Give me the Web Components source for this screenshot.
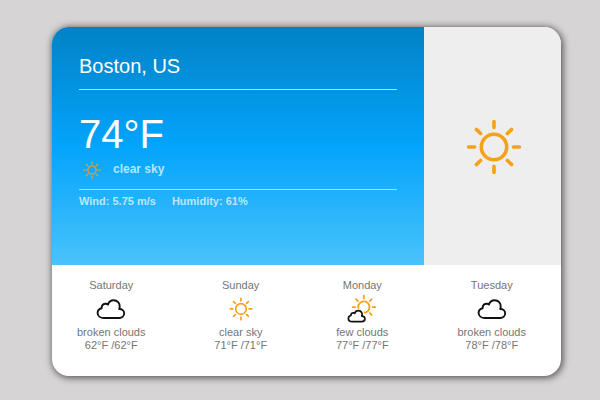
<!DOCTYPE html>
<html lang="en">
<head>
<meta charset="utf-8">
<title>Boston weather</title>
<style>
  body {
    margin: 0;
    padding: 27px 39px 24px 52px;
    background: #d6d4d5;
    font-family: "Liberation Sans", Arial, sans-serif;
    font-size: 11px;
    line-height: 13px;
    color: #757575;
  }
</style>
</head>
<body>
<weather-card>
  <current-weather slot="now" city="Boston, US" temp="74°F" sky="clear sky" wind="5.75 m/s" humidity="61%"></current-weather>
  <weather-icon slot="hero" kind="sun" style="--size:56px"></weather-icon>
  <forecast-day slot="days" day="Saturday" icon="cloud" temps="62°F /62°F">broken clouds</forecast-day>
  <forecast-day slot="days" day="Sunday" icon="clear" temps="71°F /71°F">clear sky</forecast-day>
  <forecast-day slot="days" day="Monday" icon="few" temps="77°F /77°F">few clouds</forecast-day>
  <forecast-day slot="days" day="Tuesday" icon="cloud" temps="78°F /78°F">broken clouds</forecast-day>
</weather-card>

<script>
const SUN = `
  <g fill="none" stroke="#f7a11a" stroke-linecap="round">
    <circle cx="28" cy="28" r="12.7"/>
    <path d="M28 2.6V8.6M28 47.4V53.4M2.6 28H8.6M47.4 28H53.4M10.4 10.4L14.6 14.6M41.4 41.4L45.6 45.6M10.4 45.6L14.6 41.4M41.4 14.6L45.6 10.4"/>
  </g>`;
const CLOUD = "M7.2 18.7C3.8 18.7 1 16.6 1 13.6C1 11.2 2.6 9.4 5 8.9C4.8 6 7 4.2 9.4 4.5C10.2 4.6 10.8 4.9 11.3 5.3C12.2 2.6 14.4 1 17 1C20.8 1 23.4 3.9 23.1 7.8C23 8.6 22.8 9.2 22.6 9.7C25.4 9.6 27.6 11.4 27.6 14C27.6 16.7 25.4 18.7 22.6 18.7Z";
const ICONS = {
  sun: `<svg viewBox="0 0 56 56" stroke-width="3.6">${SUN}</svg>`,
  small: `<svg viewBox="0 0 56 56" stroke-width="4.8">${SUN}</svg>`,
  clear: `<svg viewBox="0 0 30 30"><g transform="translate(3.2 3.2) scale(.42)" stroke-width="4">${SUN}</g></svg>`,
  cloud: `<svg viewBox="0 0 30 30"><path transform="translate(.6 5.3)" d="${CLOUD}" fill="#fff" stroke="#111" stroke-width="1.9" stroke-linejoin="round"/></svg>`,
  few: `<svg viewBox="0 0 30 30">
      <g transform="translate(4.4 .6) scale(.445)" stroke-width="4">${SUN}</g>
      <path transform="translate(.8 16) scale(.62)" d="${CLOUD}" fill="#fff" stroke="#fff" stroke-width="6"/>
      <path transform="translate(.8 16) scale(.62)" d="${CLOUD}" fill="#fff" stroke="#111" stroke-width="2.8" stroke-linejoin="round"/>
    </svg>`
};

class WeatherIcon extends HTMLElement {
  connectedCallback() {
    this.attachShadow({mode: "open"}).innerHTML = `
      <style>
        :host { display: block; width: var(--size, 30px); height: var(--size, 30px); }
        svg { display: block; width: 100%; height: 100%; }
      </style>${ICONS[this.getAttribute("kind")]}`;
  }
}

class CurrentWeather extends HTMLElement {
  connectedCallback() {
    const a = n => this.getAttribute(n);
    this.attachShadow({mode: "open"}).innerHTML = `
      <style>
        :host { display: block; padding: 27px; color: #fff;
          background: linear-gradient(#0282c4, #03a4fc 50%, #49c3fb); }
        h1 { margin: 0; padding-bottom: 11px; font-size: 20px; line-height: 24px; font-weight: 400;
          border-bottom: 1px solid rgba(255,255,255,.7); }
        .temp { margin: 22px 0 0; font-size: 40px; line-height: 44px; }
        .sky { display: flex; align-items: center; gap: 12px; padding: 2px 0 8px 4px; height: 23px;
          font-size: 12px; font-weight: 700; color: rgba(255,255,255,.7);
          border-bottom: 1px solid rgba(255,255,255,.6); }
        weather-icon { --size: 18px; opacity: .75; }
        .facts { display: flex; gap: 16px; margin: 5px 0 0; font-weight: 700; color: rgba(255,255,255,.7); }
        p { margin: 0; }
      </style>
      <h1>${a("city")}</h1>
      <p class="temp">${a("temp")}</p>
      <div class="sky"><weather-icon kind="small"></weather-icon><span>${a("sky")}</span></div>
      <div class="facts"><p>Wind: ${a("wind")}</p><p>Humidity: ${a("humidity")}</p></div>`;
  }
}

class ForecastDay extends HTMLElement {
  connectedCallback() {
    const a = n => this.getAttribute(n);
    this.attachShadow({mode: "open"}).innerHTML = `
      <style>
        :host { display: flex; flex-direction: column; align-items: center; white-space: nowrap; }
        weather-icon { margin: 2px 0; }
      </style>
      <span>${a("day")}</span>
      <weather-icon kind="${a("icon")}"></weather-icon>
      <slot></slot>
      <span>${a("temps")}</span>`;
  }
}

class WeatherCard extends HTMLElement {
  connectedCallback() {
    this.attachShadow({mode: "open"}).innerHTML = `
      <style>
        :host { display: block; overflow: hidden; border-radius: 17px; background: #fff;
          box-shadow: 1px 1px 7px 1px rgba(0,0,0,.6); }
        .top { display: grid; grid-template-columns: 1fr 137px; min-height: 238px; }
        .hero { display: grid; place-items: center; padding: 2px 0 0 2px; background: #eee; }
        .days { display: flex; justify-content: space-between; padding: 14px 35px 24px 25px; }
      </style>
      <div class="top"><slot name="now"></slot><div class="hero"><slot name="hero"></slot></div></div>
      <div class="days"><slot name="days"></slot></div>`;
  }
}

customElements.define("weather-icon", WeatherIcon);
customElements.define("current-weather", CurrentWeather);
customElements.define("forecast-day", ForecastDay);
customElements.define("weather-card", WeatherCard);
</script>
</body>
</html>
